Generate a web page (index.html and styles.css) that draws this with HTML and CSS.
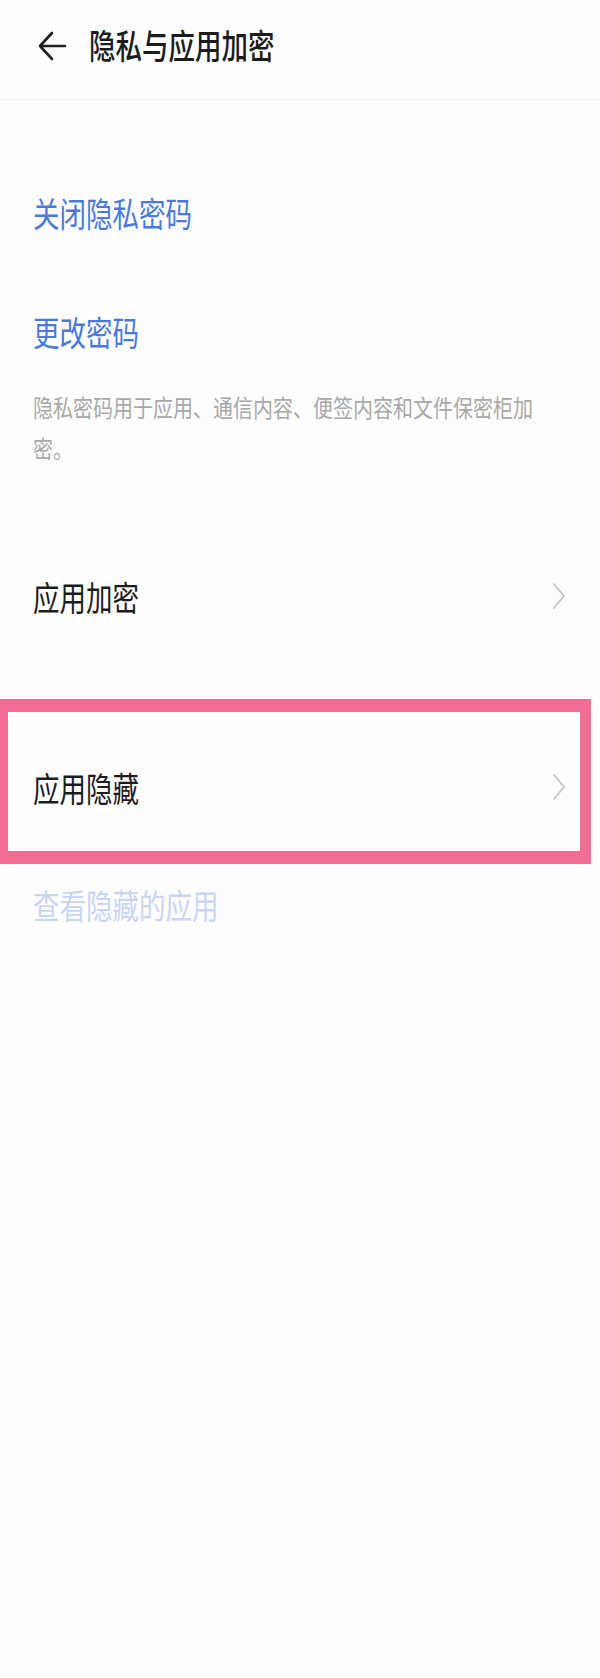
FILE: index.html
```html
<!DOCTYPE html>
<html lang="zh-CN">
  <head>
    <meta charset="UTF-8" />
    <meta name="viewport" content="width=device-width, initial-scale=1.0" />
    <title>隐私与应用加密</title>
    <link rel="stylesheet" href="styles.css">
  </head>
  <body>
    <header class="top-bar">
      <svg class="back-icon" width="30" height="32" viewBox="0 0 30 32">
        <path d="M28 16 H3 M15 3 L3 16 L15 29" fill="none" stroke="#1e1e1e" stroke-width="2.6" stroke-linecap="round" stroke-linejoin="round" />
      </svg>
      <h1 class="page-title"><span class="tall">隐私与应用加密</span></h1>
    </header>

    <section class="password-list">
      <div class="row link-row row-close"><span class="tall">关闭隐私密码</span></div>
      <div class="row link-row row-change"><span class="tall">更改密码</span></div>
      <p class="hint"><span class="tall-small">隐私密码用于应用、通信内容、便签内容和文件保密柜加密。</span></p>
    </section>

    <div class="row nav-row row-lock">
      <span class="tall">应用加密</span>
      <svg class="chevron" width="14" height="28" viewBox="0 0 14 28">
        <path d="M2 2 L12 14 L2 26" fill="none" stroke="#c4c4c4" stroke-width="1.8" stroke-linecap="round" stroke-linejoin="round" />
      </svg>
    </div>

    <div class="highlight-box">
      <div class="row nav-row row-hide">
        <span class="tall">应用隐藏</span>
        <svg class="chevron" width="14" height="28" viewBox="0 0 14 28">
          <path d="M2 2 L12 14 L2 26" fill="none" stroke="#c4c4c4" stroke-width="1.8" stroke-linecap="round" stroke-linejoin="round" />
        </svg>
      </div>
    </div>

    <div class="row disabled-row"><span class="tall">查看隐藏的应用</span></div>
  </body>
</html>
```

FILE: styles.css
```css
body {
  margin: 0;
  background-color: #fdfdfd;
  font-family: "Noto Sans CJK SC", "Noto Sans", sans-serif;
  color: #1c1c1c;
}

.tall {
  display: inline-block;
  transform: scaleY(1.3);
}

.tall-small {
  transform: scaleY(1.2);
}

.top-bar {
  height: 100px;
  box-sizing: border-box;
  padding: 0 0 8px 37px;
  display: flex;
  align-items: center;
  border-bottom: 1px solid #f3f3f3;
}

.back-icon {
  margin-right: 22px;
}

.page-title {
  margin: 0;
  font-size: 26.5px;
  font-weight: 500;
  line-height: 1;
}

.row {
  display: flex;
  align-items: center;
  box-sizing: border-box;
  padding-left: 33px;
  font-size: 26.5px;
}

.password-list {
  padding-top: 53px;
}

.link-row {
  height: 119px;
  color: #4a78dc;
}

.hint {
  margin: 3px 0 0;
  padding: 0 60px 0 33px;
  font-size: 20px;
  line-height: 34px;
  color: #a8a8a8;
}

.hint .tall-small {
  display: inline-block;
}

.nav-row {
  justify-content: space-between;
}

.row-lock {
  height: 120px;
  margin: 74px 0 43px;
  padding-right: 34px;
}

.highlight-box {
  margin-right: 9px;
  border-style: solid;
  border-color: #f26d93;
  border-width: 13px 11px 13px 8px;
}

.row-hide {
  height: 139px;
  padding: 11px 14px 0 25px;
}

.disabled-row {
  height: 80px;
  color: #c9d6f2;
}
```
